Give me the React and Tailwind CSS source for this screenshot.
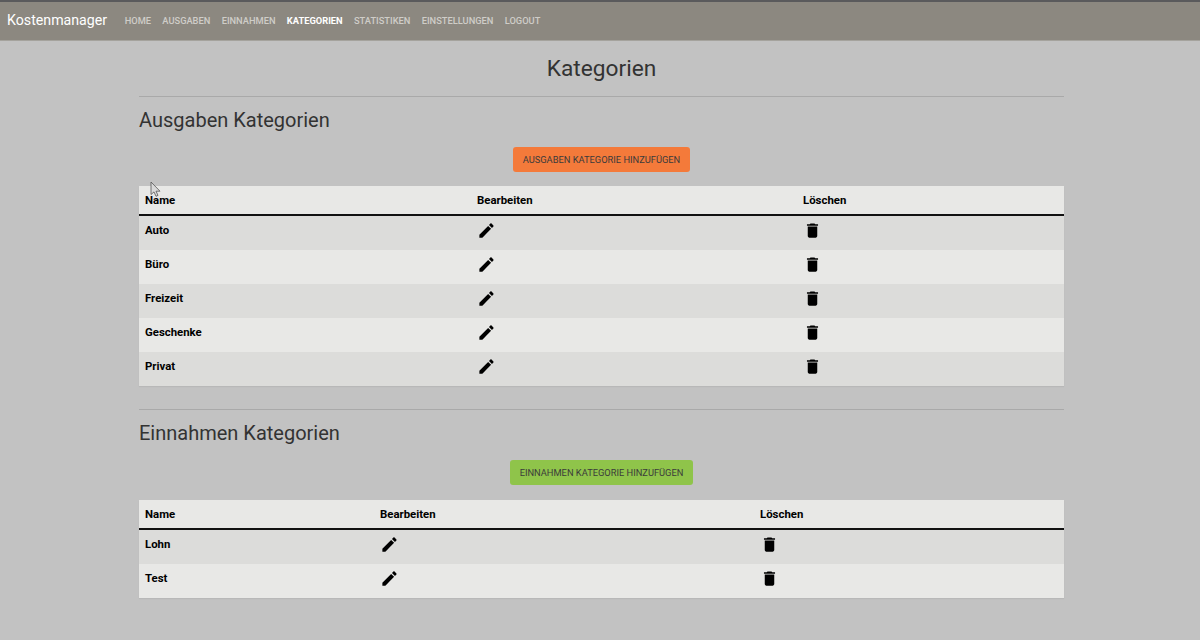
import React from 'react';

const navLinks = ['Home', 'Ausgaben', 'Einnahmen', 'Kategorien', 'Statistiken', 'Einstellungen', 'Logout'];

const EditIcon = () => (
  <svg viewBox="0 0 24 24" className="w-[19px] h-[19px] block -ml-[0.5px]" fill="currentColor">
    <path d="M3 17.25V21h3.75L17.81 9.94l-3.75-3.75L3 17.25zM20.71 7.04c.39-.39.39-1.02 0-1.41l-2.34-2.34c-.39-.39-1.02-.39-1.41 0l-1.83 1.83 3.75 3.75 1.83-1.83z" />
  </svg>
);

const DeleteIcon = () => (
  <svg viewBox="0 0 24 24" className="w-[19px] h-[19px] block -ml-[0.5px]" fill="currentColor">
    <path d="M6 19c0 1.1.9 2 2 2h8c1.1 0 2-.9 2-2V7H6v12zM19 4h-3.5l-1-1h-5l-1 1H5v2h14V4z" />
  </svg>
);

const Cursor = () => (
  <svg viewBox="0 0 12 18" className="absolute left-[150px] top-[181px] w-3 h-[18px]" fill="#d9d9d9" stroke="#555" strokeWidth="0.8">
    <path d="M1 1v12.5l3-2.6 2 4.4 2-.9-2-4.2h4z" />
  </svg>
);

const CategoryTable = ({ rows, col1, col2 }) => (
  <table className="w-full table-fixed border-separate border-spacing-0 text-[11.4px] text-black shadow-[0_1px_1px_rgba(0,0,0,0.05)]">
    <thead>
      <tr className="bg-[#e8e8e6]">
        <th className={`${col1} h-[30px] border-b-2 border-[#111] px-1.5 pt-0.5 text-left font-bold`}>Name</th>
        <th className={`${col2} h-[30px] border-b-2 border-[#111] px-1.5 pt-0.5 text-left font-bold`}>Bearbeiten</th>
        <th className="h-[30px] border-b-2 border-[#111] px-1.5 pt-0.5 text-left font-bold">Löschen</th>
      </tr>
    </thead>
    <tbody>
      {rows.map((row, i) => (
        <tr key={row} className={i % 2 === 0 ? 'bg-[#dcdcda]' : 'bg-[#e8e8e6]'}>
          <td className="h-[34px] px-1.5 pb-1 font-bold">{row}</td>
          <td className="h-[34px] px-1.5 pb-1.5"><EditIcon /></td>
          <td className="h-[34px] px-1.5 pb-1.5"><DeleteIcon /></td>
        </tr>
      ))}
    </tbody>
  </table>
);

export default function App() {
  return (
    <div className="relative min-h-[640px] bg-[#c2c2c2] font-['Roboto',sans-serif] overflow-hidden">
      <nav className="h-[41px] bg-[#8c8880] border-t-2 border-[#5a5a5c] border-b border-b-[#a5a39d] flex items-center pl-[7px]">
        <span className="text-[14.2px] text-white mr-[17.5px]">Kostenmanager</span>
        <div className="flex gap-[11.3px]">
          {navLinks.map(link => (
            <span
              key={link}
              className={`text-[9.3px] uppercase ${link === 'Kategorien' ? 'text-white font-bold' : 'text-[#cfcdc8] font-medium'}`}
            >
              {link}
            </span>
          ))}
        </div>
      </nav>

      <main className="w-[925px] ml-[139px] text-[#333]">
        <h1 className="text-[22.7px] text-center leading-[56px] h-[55px]">Kategorien</h1>
        <section className="border-t border-[#a9a9a9]">
          <h2 className="text-xl leading-[46px] h-[50px]">Ausgaben Kategorien</h2>
          <div className="flex justify-center h-[39px]">
            <button className="h-[25px] w-[177px] rounded-[3px] bg-[#f47a3a] text-[9.3px] uppercase text-[#3b3b3b]">
              Ausgaben Kategorie hinzufügen
            </button>
          </div>
          <CategoryTable rows={['Auto', 'Büro', 'Freizeit', 'Geschenke', 'Privat']} col1="w-[332px]" col2="w-[326px]" />
        </section>
        <section className="border-t border-[#a9a9a9] mt-[23px]">
          <h2 className="text-xl leading-[46px] h-[50px]">Einnahmen Kategorien</h2>
          <div className="flex justify-center h-10">
            <button className="h-[25px] w-[183px] rounded-[3px] bg-[#8fc44a] text-[9.3px] uppercase text-[#3b3b3b]">
              Einnahmen Kategorie hinzufügen
            </button>
          </div>
          <CategoryTable rows={['Lohn', 'Test']} col1="w-[235px]" col2="w-[380px]" />
        </section>
      </main>
      <Cursor />
    </div>
  );
}
